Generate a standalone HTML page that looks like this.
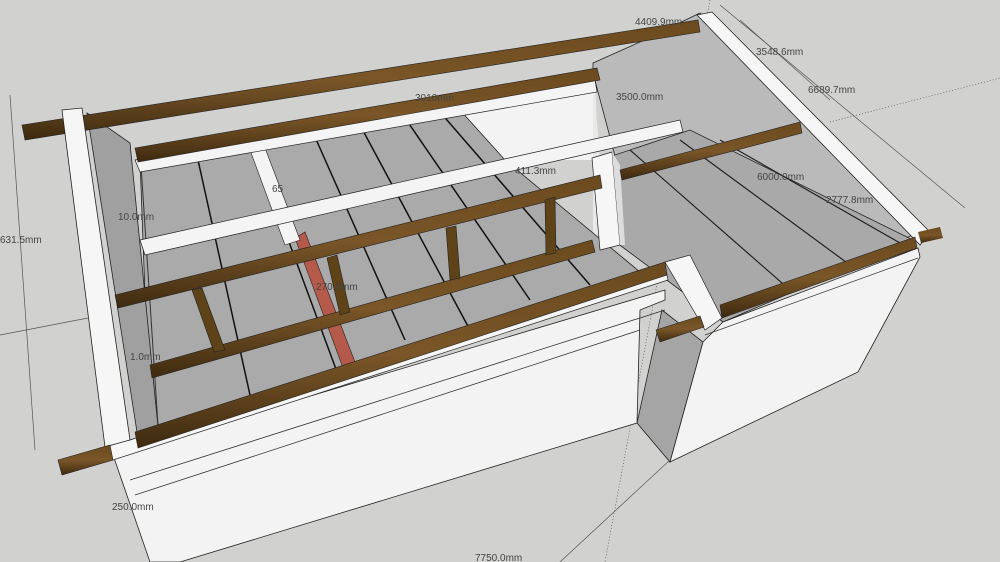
<!DOCTYPE html>
<html><head><style>
html,body{margin:0;padding:0;background:#d1d1cf;}
svg{display:block}
text{font-family:"Liberation Sans",sans-serif;font-size:10px;fill:#444}
</style></head><body>
<svg width="1000" height="562" viewBox="0 0 1000 562" xmlns="http://www.w3.org/2000/svg">
<defs>
<linearGradient id="w" x1="0" y1="0" x2="0" y2="1"><stop offset="0" stop-color="#6a4a1e"/><stop offset="0.5" stop-color="#7a5628"/><stop offset="1" stop-color="#3e2a10"/></linearGradient>
</defs>
<rect width="1000" height="562" fill="#d1d1cf"/>
<g stroke="#555" stroke-width="0.7" fill="none">
<line x1="10" y1="95" x2="35" y2="450"/>
<line x1="0" y1="335" x2="88" y2="318"/>
<line x1="720" y1="5" x2="965" y2="208"/>
<line x1="740" y1="20" x2="830" y2="100"/>
<line x1="830" y1="122" x2="1000" y2="78" stroke-dasharray="1,2"/>
<line x1="670" y1="460" x2="560" y2="562"/>
<line x1="710" y1="0" x2="605" y2="562" stroke-dasharray="1,2"/>
<line x1="130" y1="480" x2="175" y2="562"/>
</g>
<polygon points="593,63 640,42 700,13 927,230 900,240 620,175 593,73" fill="#bababa" stroke="#222" stroke-width="0.8"/>
<polygon points="460,110 595,78 598,160 505,160" fill="#f3f3f3"/>
<polygon points="593,73 600,160 610,240 593,240" fill="#e9e9e9"/>
<polygon points="600,160 690,130 913,240 723,322 613,240" fill="#a9a9a9" stroke="#222" stroke-width="0.8"/>
<g stroke="#222" stroke-width="1.2"><line x1="630" y1="150" x2="790" y2="290"/><line x1="680" y1="140" x2="850" y2="265"/><line x1="720" y1="140" x2="900" y2="243"/></g>
<polygon points="697,15 712,12 930,232 920,245" fill="#f6f6f6" stroke="#222" stroke-width="0.8"/>
<polygon points="140,160 460,110 505,160 640,272 150,430" fill="#aaaaaa" stroke="#222" stroke-width="0.8"/>
<g stroke="#111" stroke-width="1.5">
<line x1="198" y1="160" x2="250" y2="395"/><line x1="255" y1="150" x2="340" y2="380"/>
<line x1="315" y1="137" x2="405" y2="340"/><line x1="360" y1="125" x2="470" y2="330"/>
<line x1="405" y1="118" x2="530" y2="300"/><line x1="440" y1="112" x2="590" y2="285"/>
</g>
<polygon points="295,238 305,232 355,362 343,368" fill="#b55a4a" stroke="#222" stroke-width="0.6"/>
<polygon points="250,150 265,148 300,240 285,245" fill="#f4f4f4" stroke="#222" stroke-width="0.6"/>
<polygon points="87,113 130,143 158,427 137,432" fill="#a0a0a0" stroke="#222" stroke-width="0.8"/>
<line x1="140" y1="150" x2="158" y2="425" stroke="#333"/>
<polygon points="135,160 595,80 597,92 140,172" fill="#f4f4f4" stroke="#222" stroke-width="0.7"/>
<polygon points="140,240 680,120 683,132 145,255" fill="#f4f4f4" stroke="#222" stroke-width="0.7"/>
<polygon points="22,125 698,20 700,32 25,140" fill="url(#w)" stroke="#222" stroke-width="0.6"/>
<polygon points="135,148 597,68 600,80 138,162" fill="url(#w)" stroke="#222" stroke-width="0.6"/>
<polygon points="62,110 82,108 130,440 105,447" fill="#f6f6f6" stroke="#222" stroke-width="0.8"/>
<polygon points="592,158 612,152 620,245 600,250" fill="#f6f6f6" stroke="#222" stroke-width="0.7"/>
<polygon points="612,152 620,165 625,245 620,245" fill="#ddd"/>
<polygon points="115,295 600,175 602,188 118,308" fill="url(#w)" stroke="#222" stroke-width="0.6"/>
<polygon points="150,365 592,240 595,252 152,378" fill="url(#w)" stroke="#222" stroke-width="0.6"/>
<polygon points="620,170 800,122 802,133 622,180" fill="url(#w)" stroke="#222" stroke-width="0.6"/>
<g fill="#5e4218" stroke="#222" stroke-width="0.6">
<polygon points="192,290 202,288 225,350 214,352"/>
<polygon points="327,258 337,255 350,312 340,315"/>
<polygon points="446,228 456,226 460,278 450,280"/>
<polygon points="545,200 555,197 556,253 546,255"/>
</g>
<polygon points="662,310 703,342 670,462 637,423" fill="#a5a5a5" stroke="#222" stroke-width="0.8"/>
<polygon points="113,455 665,290 665,300 640,310 637,423 180,562 150,562" fill="#f3f3f3" stroke="#222" stroke-width="0.8"/>
<line x1="130" y1="480" x2="665" y2="310" stroke="#333" stroke-width="0.8"/>
<line x1="135" y1="495" x2="640" y2="330" stroke="#333" stroke-width="0.8"/>
<polygon points="105,447 130,440 665,265 668,280 113,460" fill="#f6f6f6" stroke="#222" stroke-width="0.7"/>
<polygon points="703,342 723,322 918,248 920,257 858,372 670,462" fill="#f3f3f3" stroke="#222" stroke-width="0.8"/>
<line x1="705" y1="335" x2="918" y2="258" stroke="#333" stroke-width="0.7"/>
<polygon points="665,262 690,255 722,318 705,330" fill="#f6f6f6" stroke="#222" stroke-width="0.7"/>
<polygon points="135,432 665,262 667,275 138,448" fill="url(#w)" stroke="#222" stroke-width="0.6"/>
<polygon points="720,305 915,237 917,248 722,318" fill="url(#w)" stroke="#222" stroke-width="0.6"/>
<polygon points="58,460 110,445 113,460 62,475" fill="url(#w)" stroke="#222" stroke-width="0.6"/>
<polygon points="656,330 700,316 704,327 660,342" fill="url(#w)" stroke="#222" stroke-width="0.6"/>
<polygon points="918,232 940,227 943,238 921,243" fill="url(#w)"/>
<text x="0" y="243">631.5mm</text>
<text x="118" y="220">10.0mm</text>
<text x="130" y="360">1.0mm</text>
<text x="112" y="510">250.0mm</text>
<text x="475" y="561">7750.0mm</text>
<text x="316" y="290">270.0mm</text>
<text x="515" y="174">411.3mm</text>
<text x="272" y="192">65</text>
<text x="415" y="101">3010mm</text>
<text x="616" y="100">3500.0mm</text>
<text x="635" y="25">4409.9mm</text>
<text x="756" y="55">3548.6mm</text>
<text x="808" y="93">6689.7mm</text>
<text x="757" y="180">6000.0mm</text>
<text x="826" y="203">2777.8mm</text>
</svg>
</body></html>
